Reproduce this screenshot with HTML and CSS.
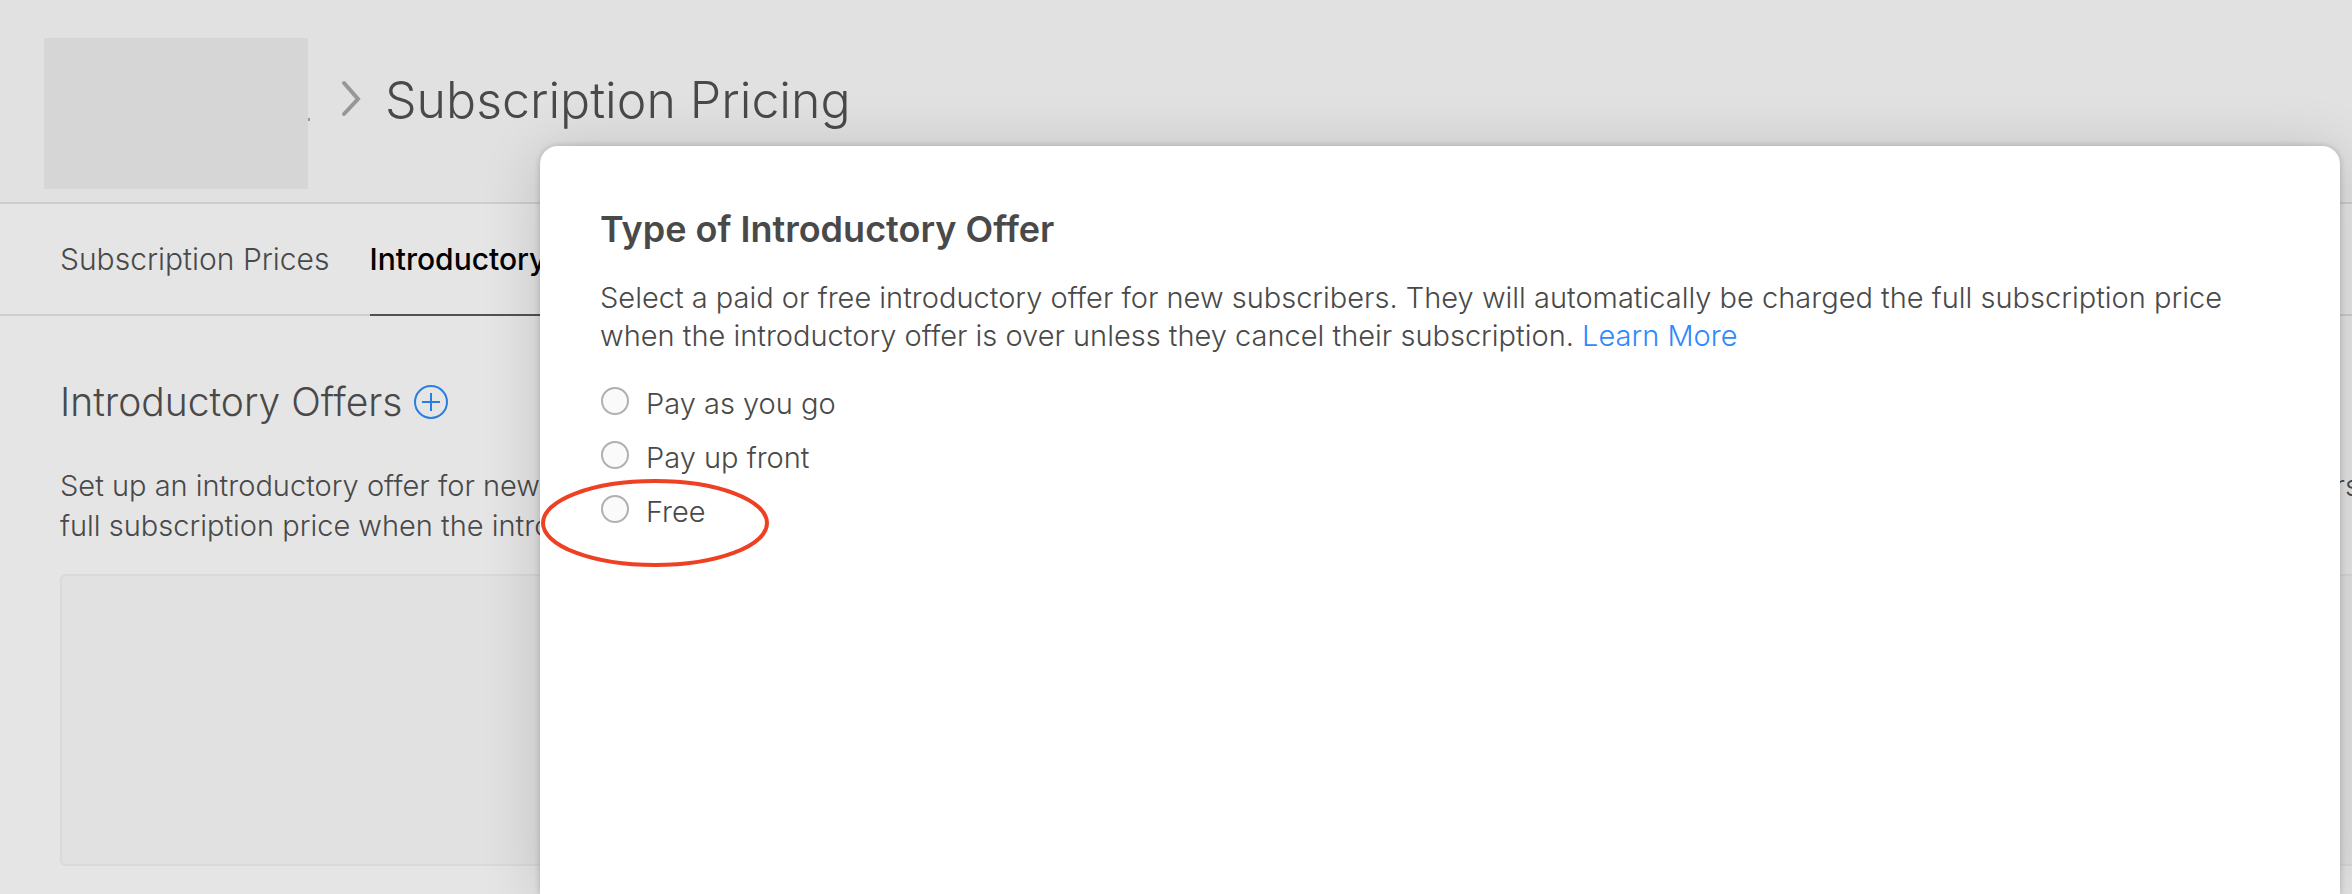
FILE: index.html
```html
<!DOCTYPE html>
<html lang="en">
<head>
  <meta charset="UTF-8" />
  <meta name="viewport" content="width=device-width, initial-scale=1.0"/>
  <title>Subscription Pricing</title>
  <link rel="stylesheet" href="styles.css">
</head>
<body>
  <header class="header">
    <div class="app-name"></div>
    <svg class="chevron" viewBox="0 0 20 38" fill="none" stroke="#979797" stroke-width="4" stroke-linecap="round">
      <path d="M3 4 L17 20 L3 35"/>
    </svg>
    <h1>Subscription Pricing</h1>
  </header>

  <nav class="tabs">
    <a href="#prices">Subscription Prices</a>
    <a href="#offers" class="active">Introductory Offers</a>
  </nav>

  <main class="content">
    <div class="section-title">
      <h2>Introductory Offers</h2>
      <button class="add" aria-label="Add introductory offer">
        <svg viewBox="0 0 34 34" fill="none" stroke="#2a7de1" stroke-width="2">
          <circle cx="17" cy="17" r="16"/>
          <path d="M17 8 V26 M8 17 H26"/>
        </svg>
      </button>
    </div>
    <div class="intro">
      <div class="intro-line"><span>Set up an introductory offer for new</span><span>subscribers</span></div>
      <div>full subscription price when the introductory</div>
    </div>
    <div class="panel"></div>
  </main>

  <div class="overlay">
    <div class="modal" role="dialog" aria-labelledby="modal-title">
      <h3 id="modal-title">Type of Introductory Offer</h3>
      <p>Select a paid or free introductory offer for new subscribers. They will automatically be charged the full subscription price when the introductory offer is over unless they cancel their subscription. <a href="#learn">Learn More</a></p>
      <form class="options">
        <label><input type="radio" name="offer" value="go"><span>Pay as you go</span></label>
        <label><input type="radio" name="offer" value="front"><span>Pay up front</span></label>
        <label class="marked"><input type="radio" name="offer" value="free"><span>Free</span>
          <svg class="ring" viewBox="0 0 228 88" fill="none" stroke="#ee4023" stroke-width="4">
            <ellipse cx="114" cy="44" rx="112" ry="42"/>
          </svg>
        </label>
      </form>
    </div>
  </div>
</body>
</html>
```

FILE: styles.css
```css
:root {
  --bg: #e5e5e5;
  --header: #e1e1e1;
  --line: #cdcdcd;
  --text: #494949;
}
* {
  box-sizing: border-box;
  margin: 0;
}
body {
  background: var(--bg);
  color: var(--text);
  font-family: Inter, "Liberation Sans", sans-serif;
  font-size: 29px;
  font-weight: 300;
  line-height: 40px;
  height: 100vh;
  overflow: hidden;
}
.header {
  display: flex;
  align-items: flex-start;
  height: 204px;
  padding: 38px 44px 0;
  background: var(--header);
  border-bottom: 2px solid var(--line);
}
.app-name {
  position: relative;
  width: 264px;
  height: 151px;
  background: #d6d6d6;
}
.app-name::after {
  content: "";
  position: absolute;
  left: 100%;
  top: 80px;
  width: 2px;
  height: 3px;
  background: #999;
}
.chevron {
  width: 20px;
  height: 38px;
  margin: 41px 24px 0 33px;
}
h1 {
  font-size: 50px;
  font-weight: 300;
  line-height: 60px;
  margin-top: 32px;
}
.tabs {
  display: flex;
  gap: 40px;
  padding: 0 60px;
  border-bottom: 2px solid var(--line);
}
.tabs a {
  color: var(--text);
  font-size: 30px;
  text-decoration: none;
  line-height: 110px;
  margin-bottom: -2px;
  border-bottom: 2px solid transparent;
}
.tabs a.active {
  color: #000;
  font-weight: 500;
  border-color: #505155;
}
.content {
  padding: 62px 0 0 60px;
}
.section-title {
  display: flex;
  align-items: center;
  gap: 12px;
}
h2 {
  font-size: 39px;
  font-weight: 300;
  line-height: 48px;
}
.add {
  width: 34px;
  height: 34px;
  padding: 0;
  border: none;
  background: none;
  cursor: pointer;
}
.add svg {
  display: block;
}
.intro {
  margin-top: 40px;
}
.intro-line {
  display: flex;
  justify-content: space-between;
  margin-right: -8px;
}
.panel {
  height: 292px;
  margin-top: 28px;
  background: var(--header);
  border: 2px solid #d9d9d9;
  border-right: none;
  border-radius: 6px 0 0 6px;
}
.overlay {
  position: absolute;
  inset: 0;
  padding: 146px 12px 0 540px;
  overflow: hidden;
}
.modal {
  height: 100%;
  padding: 60px;
  background: #fff;
  border-radius: 18px 18px 0 0;
  box-shadow: 0 0 6px rgba(0, 0, 0, 0.2), 0 6px 60px rgba(0, 0, 0, 0.16);
}
h3 {
  font-size: 36px;
  font-weight: 600;
  line-height: 46px;
}
.modal p {
  margin-top: 27px;
  line-height: 38px;
}
.modal p a {
  color: #2f89fc;
  text-decoration: none;
}
.options {
  display: flex;
  flex-direction: column;
  gap: 14px;
  margin-top: 29px;
}
.options label {
  display: flex;
  align-items: flex-start;
  align-self: flex-start;
  gap: 17px;
}
.options input {
  appearance: none;
  width: 28px;
  height: 28px;
  margin: 3px 0 0 1px;
  border: 2px solid #b0b0b0;
  border-radius: 50%;
  background: #fafafa;
}
.marked {
  position: relative;
}
.ring {
  position: absolute;
  left: -59px;
  top: -13px;
  width: 228px;
  height: 88px;
}
```
